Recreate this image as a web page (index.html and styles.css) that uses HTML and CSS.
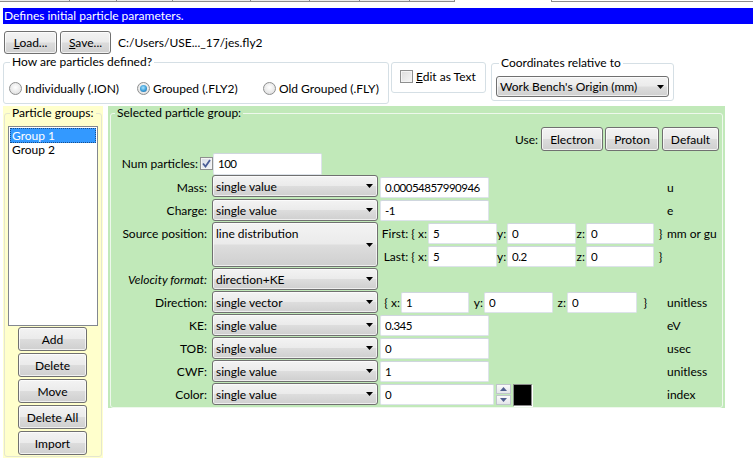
FILE: index.html
```
<!DOCTYPE html>
<html>
<head>
<meta charset="utf-8">
<link rel="stylesheet" href="styles.css">
</head>
<body>
<div class="strip">
  <span class="seg s1"></span><span class="seg s2"></span><span class="seg s3"></span><span class="seg s4"></span><span class="seg s5"></span><span class="seg s6"></span><span class="seg s7"></span><span class="seg s8"></span><span class="seg-gap"></span><span class="seg s9"></span>
</div>
<div class="titlebar">Defines initial particle parameters.</div>
<div class="toolbar">
  <button class="btn btn-load"><u>L</u>oad...</button>
  <button class="btn btn-save"><u>S</u>ave...</button>
  <span class="path">C:/Users/USE..._17/jes.fly2</span>
</div>
<div class="options">
  <fieldset class="gb gb-how">
    <legend>How are particles defined?</legend>
    <div class="radios">
      <label class="radio r1"><span class="rb"></span>Individually (.ION)</label>
      <label class="radio r2"><span class="rb on"></span>Grouped (.FLY2)</label>
      <label class="radio r3"><span class="rb"></span>Old Grouped (.FLY)</label>
    </div>
  </fieldset>
  <div class="gb-edit">
    <label class="chk"><span class="cb"></span><span><u>E</u>dit as Text</span></label>
  </div>
  <fieldset class="gb gb-coord">
    <legend>Coordinates relative to</legend>
    <div class="combo combo-coord"><span class="ctext">Work Bench's Origin (mm)</span><svg class="arrow" width="7" height="4" viewBox="0 0 7 4"><polygon points="0,0 7,0 3.5,4" fill="#000"/></svg></div>
  </fieldset>
</div>
<div class="main">
  <div class="left">
    <fieldset class="gb gb-groups">
      <legend>Particle groups:</legend>
      <div class="listbox">
        <div class="item sel">Group 1</div>
        <div class="item">Group 2</div>
      </div>
      <div class="lbtns">
        <button class="btn lbtn">Add</button>
        <button class="btn lbtn">Delete</button>
        <button class="btn lbtn">Move</button>
        <button class="btn lbtn">Delete All</button>
        <button class="btn lbtn">Import</button>
      </div>
    </fieldset>
  </div>
  <div class="green">
    <fieldset class="gb gb-sel">
      <legend>Selected particle group:</legend>
      <div class="userow">
        <span class="uselbl">Use:</span>
        <button class="btn ub ub-e">Electron</button>
        <button class="btn ub ub-p">Proton</button>
        <button class="btn ub ub-d">Default</button>
      </div>
      <div class="form">
        <div class="lab lab-num">Num particles:<span class="cb checked"><svg width="11" height="11" viewBox="0 0 11 11"><path d="M2 5.5 L4.5 8.5 L9 2" fill="none" stroke="#4a5c96" stroke-width="1.8"/></svg></span></div>
        <div class="vcell span2"><input class="tb tb-num" type="text" value="100"></div>
        <div class="unit"></div>

        <div class="lab">Mass:</div>
        <div class="ccell"><div class="combo"><span class="ctext">single value</span><svg class="arrow" width="7" height="4" viewBox="0 0 7 4"><polygon points="0,0 7,0 3.5,4" fill="#000"/></svg></div></div>
        <div class="vcell"><input class="tb tb-val" type="text" value="0.00054857990946"></div>
        <div class="unit">u</div>

        <div class="lab">Charge:</div>
        <div class="ccell"><div class="combo"><span class="ctext">single value</span><svg class="arrow" width="7" height="4" viewBox="0 0 7 4"><polygon points="0,0 7,0 3.5,4" fill="#000"/></svg></div></div>
        <div class="vcell"><input class="tb tb-val" type="text" value="-1"></div>
        <div class="unit">e</div>

        <div class="lab lab-top">Source position:</div>
        <div class="ccell"><div class="combo combo-tall"><span class="ctext">line distribution</span><svg class="arrow" width="7" height="4" viewBox="0 0 7 4"><polygon points="0,0 7,0 3.5,4" fill="#000"/></svg></div></div>
        <div class="vcell vcol">
          <div class="xyz">
            <span class="xl xl-first">First: { x:</span><input class="tb tb-c" type="text" value="5">
            <span class="yl">y:</span><input class="tb tb-c" type="text" value="0">
            <span class="zl">z:</span><input class="tb tb-c tb-z" type="text" value="0">
            <span class="br">}</span>
          </div>
          <div class="xyz">
            <span class="xl xl-first">Last: { x:</span><input class="tb tb-c" type="text" value="5">
            <span class="yl">y:</span><input class="tb tb-c" type="text" value="0.2">
            <span class="zl">z:</span><input class="tb tb-c tb-z" type="text" value="0">
            <span class="br">}</span>
          </div>
        </div>
        <div class="unit unit-top">mm or gu</div>

        <div class="lab lab-it">Velocity format:</div>
        <div class="ccell"><div class="combo"><span class="ctext">direction+KE</span><svg class="arrow" width="7" height="4" viewBox="0 0 7 4"><polygon points="0,0 7,0 3.5,4" fill="#000"/></svg></div></div>
        <div class="vcell"></div>
        <div class="unit"></div>

        <div class="lab">Direction:</div>
        <div class="ccell"><div class="combo"><span class="ctext">single vector</span><svg class="arrow" width="7" height="4" viewBox="0 0 7 4"><polygon points="0,0 7,0 3.5,4" fill="#000"/></svg></div></div>
        <div class="vcell">
          <div class="xyz">
            <span class="xl xl-dir">{ x:</span><input class="tb tb-d1" type="text" value="1">
            <span class="yl yl-dir">y:</span><input class="tb tb-d2" type="text" value="0">
            <span class="zl zl-dir">z:</span><input class="tb tb-d3" type="text" value="0">
            <span class="br br-dir">}</span>
          </div>
        </div>
        <div class="unit">unitless</div>

        <div class="lab">KE:</div>
        <div class="ccell"><div class="combo"><span class="ctext">single value</span><svg class="arrow" width="7" height="4" viewBox="0 0 7 4"><polygon points="0,0 7,0 3.5,4" fill="#000"/></svg></div></div>
        <div class="vcell"><input class="tb tb-val" type="text" value="0.345"></div>
        <div class="unit">eV</div>

        <div class="lab">TOB:</div>
        <div class="ccell"><div class="combo"><span class="ctext">single value</span><svg class="arrow" width="7" height="4" viewBox="0 0 7 4"><polygon points="0,0 7,0 3.5,4" fill="#000"/></svg></div></div>
        <div class="vcell"><input class="tb tb-val" type="text" value="0"></div>
        <div class="unit">usec</div>

        <div class="lab">CWF:</div>
        <div class="ccell"><div class="combo"><span class="ctext">single value</span><svg class="arrow" width="7" height="4" viewBox="0 0 7 4"><polygon points="0,0 7,0 3.5,4" fill="#000"/></svg></div></div>
        <div class="vcell"><input class="tb tb-val" type="text" value="1"></div>
        <div class="unit">unitless</div>

        <div class="lab">Color:</div>
        <div class="ccell"><div class="combo"><span class="ctext">single value</span><svg class="arrow" width="7" height="4" viewBox="0 0 7 4"><polygon points="0,0 7,0 3.5,4" fill="#000"/></svg></div></div>
        <div class="vcell">
          <input class="tb tb-color" type="text" value="0">
          <div class="spin">
            <span class="sp"><svg width="7" height="4" viewBox="0 0 7 4"><polygon points="0,4 7,4 3.5,0" fill="#4f5f8f"/></svg></span>
            <span class="sp"><svg width="7" height="4" viewBox="0 0 7 4"><polygon points="0,0 7,0 3.5,4" fill="#4f5f8f"/></svg></span>
          </div>
          <span class="swatch"></span>
        </div>
        <div class="unit">index</div>
      </div>
    </fieldset>
  </div>
</div>
</body>
</html>
```
FILE: styles.css
```
* { box-sizing: border-box; }
html, body { margin: 0; padding: 0; background: #fff; }
body {
  font-family: Lato, "Open Sans", sans-serif;
  font-size: 12px;
  color: #000;
  width: 753px;
  height: 475px;
  overflow: hidden;
}
button, input { font-family: inherit; font-size: 12px; font-weight: 400; color: #000; }

.strip { display: flex; height: 8px; }
.seg { height: 2px; border-bottom: 1px solid #8c8c8c; border-right: 1px solid #8c8c8c; background: #ececec; }
.s1 { width: 70px; } .s2 { width: 47px; } .s3 { width: 56px; } .s4 { width: 78px; }
.s5 { width: 59px; } .s6 { width: 50px; } .s7 { width: 50px; } .s8 { width: 45px; }
.seg-gap { width: 96px; }
.s9 { flex: 1; border-left: 1px solid #8c8c8c; border-right: none; background: #fff; }

.titlebar {
  margin-left: 3px;
  height: 16px;
  line-height: 16px;
  background: #0000ff;
  color: #fff;
  padding-left: 1px;
}

.btn {
  height: 23px;
  border: 1px solid #707070;
  border-radius: 3px;
  background: linear-gradient(#f3f3f3 0%, #ebebeb 48%, #dcdcdc 52%, #cfcfcf 100%);
  padding: 0;
  line-height: 19px;
  text-align: center;
  font-weight: 400;
  box-shadow: inset 0 0 0 1px rgba(255,255,255,0.7);
}

.toolbar { display: flex; align-items: center; margin-top: 7px; padding-left: 4px; height: 23px; }
.btn-load { width: 53px; }
.btn-save { width: 51px; margin-left: 3px; }
.path { margin-left: 7px; }

.options { display: flex; align-items: flex-start; margin-top: 1px; }
fieldset.gb { margin: 0; padding: 0; border: 1px solid #d5dfe5; border-radius: 3px; min-width: 0; }
fieldset.gb legend { padding: 0 2px; line-height: 14px; height: 14px; }

.gb-how { width: 386px; margin-left: 3px !important; }
.gb-how legend { margin-left: 6px; }
.radios { display: flex; align-items: center; padding: 12px 0 8px 5px; height: 34px; }
.radio { display: flex; align-items: center; height: 14px; }
.r1 { width: 128px; } .r2 { width: 126px; }
.rb {
  width: 13px; height: 13px; border-radius: 50%;
  border: 1px solid #8e8f8f;
  background: radial-gradient(circle at 50% 40%, #ffffff 0%, #e8e8e8 60%, #d6d6d6 100%);
  margin-right: 3px;
  display: flex; align-items: center; justify-content: center;
}
.rb.on::after {
  content: ""; width: 7px; height: 7px; border-radius: 50%;
  background: radial-gradient(circle at 45% 40%, #a8e4ff 0%, #3a9bd6 55%, #17598f 100%);
}

.gb-edit {
  width: 95px; height: 31px; margin-left: 2px; margin-top: 7px;
  border: 1px solid #d5dfe5; border-radius: 3px;
  display: flex; align-items: center; padding-left: 8px; padding-bottom: 2px;
}
.chk { display: flex; align-items: center; }
.cb {
  width: 13px; height: 13px;
  border: 1px solid #8e8f8f;
  background: linear-gradient(135deg, #dcdcdc 0%, #f6f6f6 100%);
  box-shadow: inset 0 0 0 1px #f4f4f4;
  margin-right: 3px;
  display: inline-flex; align-items: center; justify-content: center;
}
.gb-coord { width: 183px; margin-left: 5px !important; margin-top: 1px !important; padding-bottom: 3px !important; }
.gb-coord legend { margin-left: 7px; }

.combo {
  height: 22px;
  width: 166px;
  border: 1px solid #707070;
  border-radius: 3px;
  background: linear-gradient(#f3f3f3 0%, #ebebeb 48%, #dddddd 52%, #cfcfcf 100%);
  box-shadow: inset 0 0 0 1px rgba(255,255,255,0.65);
  display: flex; align-items: center; justify-content: space-between;
  padding: 0 4px 0 3px;
}
.combo-coord { width: 173px; height: 21px; margin: 6px 0 0 4px; }
.combo-tall { height: 45px; }
.combo-tall .ctext { align-self: flex-start; padding-top: 3px; }
.arrow { flex: none; }

.main { display: flex; margin-top: 2px; }
.left { margin-left: 3px; width: 100px; height: 352px; background: #ffffcc; padding: 0 1px 1px 1px; }
.gb-groups { border-color: #e4e6cf !important; height: 351px; }
.gb-groups legend { margin-left: 5px; }
.listbox {
  margin: 6px 0 0 3px;
  width: 90px; height: 200px;
  border: 1px solid #828790;
  background: #fff;
  padding: 1px;
}
.item { height: 15px; line-height: 14px; padding-left: 2px; }
.item.sel { background: #3399ff; color: #fff; border: 1px dotted #1a4e8a; padding-left: 1px; line-height: 13px; }
.lbtns { display: flex; flex-direction: column; gap: 2px; margin: 1px 0 0 13px; }
.lbtn { width: 69px; height: 24px; }

.green { margin-left: 5px; width: 617px; height: 302px; background: #c1e9b9; padding: 0 2px; }
.gb-sel { border-color: #eef8ec !important; height: 302px; }
.gb-sel legend { margin-left: 4px; }
.userow { display: flex; justify-content: flex-end; align-items: center; margin-top: 7px; padding-right: 3px; height: 24px; }
.uselbl { margin-right: 3px; }
.ub { height: 24px; }
.ub-e { width: 62px; }
.ub-p { width: 54px; margin-left: 2px; }
.ub-d { width: 57px; margin-left: 3px; }

.form {
  display: grid;
  grid-template-columns: 100px 168px 287px 1fr;
  grid-template-rows: 23px 24px 23px 46px 23px 23px 23px 23px 23px 23px;
  margin-top: 1px;
  padding-left: 1px;
}
.lab { display: flex; align-items: center; justify-content: flex-end; padding-right: 5px; white-space: nowrap; }
.lab-top { align-items: flex-start; padding-top: 4px; }
.lab-it { font-style: italic; }
.lab-num { padding-right: 0; margin-right: -1px; }
.lab-num .cb { margin: 0 0 0 2px; background: linear-gradient(135deg, #d8dce6 0%, #f4f5f8 100%); }
.span2 { grid-column: 2 / 4; }
.ccell { display: flex; align-items: flex-start; }
.vcell { display: flex; align-items: center; }
.vcol { flex-direction: column; align-items: stretch; }
.unit { display: flex; align-items: center; }
.unit-top { align-items: flex-start; line-height: 23px; }

.tb {
  height: 21px;
  border: 1px solid #dde3ea;
  border-top-color: #cfd6de;
  background: #fff;
  padding: 0 0 0 4px;
  outline: none;
  border-radius: 2px;
  font-size: 11.5px;
  letter-spacing: -0.5px;
}
.tb-num { width: 109px; height: 22px; margin-left: 1px; }
.tb-val { width: 109px; }
.xyz { display: flex; align-items: center; height: 23px; }
.xl, .yl, .zl { text-align: right; padding-right: 1px; white-space: nowrap; flex: none; }
.xl-first { width: 48px; }
.yl { width: 10px; }
.zl { width: 10px; }
.tb-c { width: 69px; }
.tb-z { width: 68px; }
.br { width: 13px; text-align: center; }
.xl-dir { width: 21px; }
.tb-d1 { width: 68px; }
.yl-dir { width: 15px; }
.tb-d2 { width: 69px; }
.zl-dir { width: 14px; }
.tb-d3 { width: 70px; }
.br-dir { width: 10px; text-align: right; }

.tb-color { width: 114px; }
.spin { display: flex; flex-direction: column; gap: 1px; margin-left: 2px; width: 15px; height: 21px; }
.sp {
  height: 10px;
  border: 1px solid #bfc4cc;
  background: linear-gradient(#fafafa, #e4e6ea);
  display: flex; align-items: center; justify-content: center;
}
.swatch { width: 19px; height: 22px; margin-left: 2px; background: #000; border: 1px solid #8a8a8a; box-shadow: 1px 1px 0 #fff; }
```
